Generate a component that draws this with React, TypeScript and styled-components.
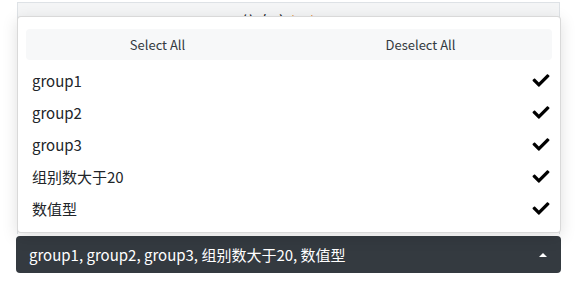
import React from 'react';
import styled, { createGlobalStyle } from 'styled-components';
import { FaCheck } from 'react-icons/fa';

const GlobalStyle = createGlobalStyle`
  body {
    margin: 0;
    background: #fff;
    font-family: "Noto Sans CJK SC", "Noto Sans", sans-serif;
    color: #212529;
  }
`;

const Page = styled.div`
  width: 545px;
  padding: 2px 0 0 16px;
`;

const TablePanel = styled.div`
  height: 232px;
  margin: 0 1px;
  border: 1px solid #dee2e6;
  border-bottom: none;
  box-sizing: border-box;
`;

const TableHead = styled.div`
  background: #f4f5f6;
  height: 34px;
  padding-top: 6px;
  box-sizing: border-box;
  text-align: center;
  font-size: 16px;
  line-height: 24px;
  padding-right: 20px;
`;

const Orange = styled.span`
  color: #e67e22;
`;

const SelectWrap = styled.div`
  position: relative;
  margin-top: 2px;
`;

const SelectButton = styled.div`
  display: flex;
  align-items: center;
  justify-content: space-between;
  height: 37px;
  padding: 0 13px 0 13px;
  border-radius: 4px;
  background: #343a40;
  color: #fff;
  font-size: 15px;
`;

const Caret = styled.span`
  width: 0;
  height: 0;
  margin-right: 1px;
  border-left: 4px solid transparent;
  border-right: 4px solid transparent;
  border-bottom: 4px solid #fff;
`;

const Menu = styled.div`
  position: absolute;
  left: 1px;
  right: 0;
  bottom: 100%;
  margin-bottom: 3px;
  padding: 8px 0;
  background: #fff;
  border: 1px solid rgba(0, 0, 0, 0.15);
  border-radius: 4px;
  box-shadow: 0 4px 16px rgba(0, 0, 0, 0.13);
`;

const ActionsBox = styled.div`
  padding: 4px 8px;
`;

const ActionsGroup = styled.div`
  display: flex;
  height: 31px;
  background: #f7f8f9;
  border-radius: 4px;
`;

const ActionButton = styled.div`
  flex: 1;
  display: flex;
  align-items: center;
  justify-content: center;
  font-size: 13px;
  color: #343a40;
`;

const Item = styled.div`
  display: flex;
  align-items: center;
  justify-content: space-between;
  height: 32px;
  padding: 0 10px 0 14px;
  font-size: 15px;
  color: #212529;
  svg {
    width: 18px;
    height: 17px;
    color: #000;
  }
`;

const options = ['group1', 'group2', 'group3', '组别数大于20', '数值型'];

const App = () => (
  <Page>
    <GlobalStyle />
    <TablePanel>
      <TableHead>
        信息言<Orange>(…)</Orange>
      </TableHead>
    </TablePanel>
    <SelectWrap>
      <Menu>
        <ActionsBox>
          <ActionsGroup>
            <ActionButton>Select All</ActionButton>
            <ActionButton>Deselect All</ActionButton>
          </ActionsGroup>
        </ActionsBox>
        {options.map((o) => (
          <Item key={o}>
            <span>{o}</span>
            <FaCheck />
          </Item>
        ))}
      </Menu>
      <SelectButton>
        <span>{options.join(', ')}</span>
        <Caret />
      </SelectButton>
    </SelectWrap>
  </Page>
);

export default App;
